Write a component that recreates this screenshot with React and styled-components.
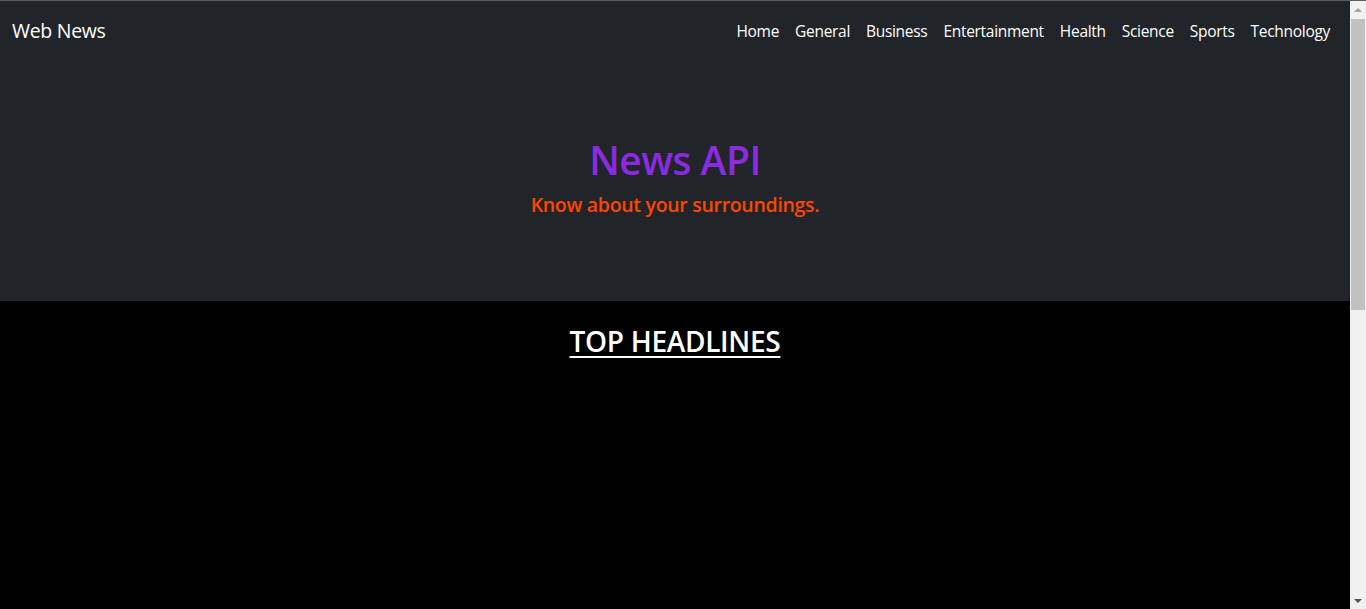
import React from "react";
import styled, { createGlobalStyle } from "styled-components";

const GlobalStyle = createGlobalStyle`
  html, body {
    margin: 0;
    padding: 0;
  }
  body {
    background-color: #000;
    border-top: 1px solid #5c5c5c;
    font-family: "Open Sans", "Noto Sans", "Liberation Sans", sans-serif;
  }
`;

const links = [
  "Home",
  "General",
  "Business",
  "Entertainment",
  "Health",
  "Science",
  "Sports",
  "Technology",
];

function App() {
  return (
    <>
      <GlobalStyle />
      <Page>
        <Header>
          <Navbar>
            <Brand href="#">Web News</Brand>
            <NavList>
              {links.map((l) => (
                <NavItem key={l}>
                  <NavLink href="#">{l}</NavLink>
                </NavItem>
              ))}
            </NavList>
          </Navbar>
          <Hero>
            <HeroTitle>News API</HeroTitle>
            <HeroSub>Know about your surroundings.</HeroSub>
          </Hero>
        </Header>
        <Main>
          <SectionTitle>TOP HEADLINES</SectionTitle>
        </Main>
      </Page>
      <ScrollTrack>
        <Arrow $up />
        <Thumb />
        <Arrow />
      </ScrollTrack>
    </>
  );
}

export default App;

const Page = styled.div`
  margin-right: 16px;
`;

const Header = styled.header`
  background-color: #212529;
  height: 300px;
  display: flex;
  flex-direction: column;
`;

const Navbar = styled.nav`
  display: flex;
  align-items: center;
  justify-content: space-between;
  height: 59px;
  padding: 0 12px;
`;

const Brand = styled.a`
  color: #fff;
  font-size: 19.5px;
  text-decoration: none;
  letter-spacing: -0.3px;
`;

const NavList = styled.ul`
  display: flex;
  list-style: none;
  margin: 0;
  padding: 0;
`;

const NavItem = styled.li``;

const NavLink = styled.a`
  display: block;
  padding: 8px 8px;
  color: #fff;
  font-size: 15.5px;
  letter-spacing: -0.3px;
  text-decoration: none;
`;

const Hero = styled.div`
  display: flex;
  flex-direction: column;
  align-items: center;
  padding-top: 77px;
`;

const HeroTitle = styled.h1`
  margin: 0;
  color: #8a2be2;
  font-size: 39px;
  font-weight: 600;
  line-height: 1.2;
  letter-spacing: -0.5px;
`;

const HeroSub = styled.h5`
  margin: 9px 0 0;
  color: #ff4500;
  font-size: 19.5px;
  font-weight: 600;
  line-height: 1.2;
  letter-spacing: -0.3px;
`;

const Main = styled.main`
  background-color: #000;
  min-height: 900px;
  padding-top: 24px;
`;

const SectionTitle = styled.h2`
  margin: 0;
  text-align: center;
  color: #fff;
  font-size: 28px;
  font-weight: 600;
  line-height: 1.2;
  letter-spacing: -0.3px;
  text-decoration: underline;
  text-decoration-thickness: 2px;
  text-underline-offset: 4px;
`;

const ScrollTrack = styled.div`
  position: fixed;
  top: 1px;
  right: 0;
  bottom: 0;
  width: 16px;
  background-color: #f1f1f1;
  display: flex;
  flex-direction: column;
  align-items: center;
`;

const Arrow = styled.div`
  flex: none;
  height: 17px;
  width: 16px;
  display: flex;
  align-items: center;
  justify-content: center;
  &::before {
    content: "";
    width: 0;
    height: 0;
    border-left: 4px solid transparent;
    border-right: 4px solid transparent;
    ${(p) =>
      p.$up
        ? "border-bottom: 4px solid #a3a3a3;"
        : "border-top: 4px solid #505050;"}
  }
`;

const Thumb = styled.div`
  flex: none;
  width: 14px;
  height: 291px;
  background-color: #c1c1c1;
  margin-top: 1px;
  margin-bottom: auto;
`;
